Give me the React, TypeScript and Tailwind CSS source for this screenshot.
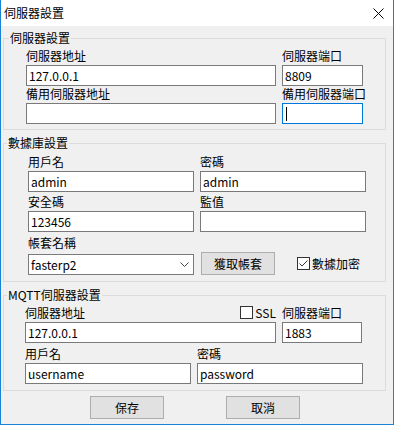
import React from "react";

const Label = ({ children, className = "" }: { children: React.ReactNode; className?: string }) => (
  <div className={`h-[15px] leading-[15px] text-[12px] text-black whitespace-nowrap ${className}`}>{children}</div>
);

const Field = ({ value = "", className = "", focused = false }: { value?: string; className?: string; focused?: boolean }) => (
  <div
    className={`h-[21px] bg-white border ${focused ? "border-[#0078d7]" : "border-[#7a7a7a]"} flex items-center pl-[2px] text-[12px] text-black whitespace-nowrap ${className}`}
  >
    {value}
    {focused && <span className="ml-[1px] w-px h-[14px] bg-black" />}
  </div>
);

const Check = ({ checked = false }: { checked?: boolean }) => (
  <span className="w-[13px] h-[13px] border border-[#333333] bg-white flex items-center justify-center shrink-0">
    {checked && (
      <svg width="11" height="11" viewBox="0 0 11 11">
        <path d="M1.5 5.5 L4 8 L9.5 2.5" fill="none" stroke="#333333" strokeWidth="1" />
      </svg>
    )}
  </span>
);

const Button = ({ children, className = "" }: { children: React.ReactNode; className?: string }) => (
  <div
    className={`w-[74px] h-[23px] bg-[#e1e1e1] border border-[#adadad] flex items-center justify-center text-[12px] text-black ${className}`}
  >
    {children}
  </div>
);

const Legend = ({ children, className = "" }: { children: React.ReactNode; className?: string }) => (
  <span className={`absolute top-[-8px] bg-[#f0f0f0] px-px leading-[14px] text-[12px] text-black whitespace-nowrap ${className}`}>
    {children}
  </span>
);

export default function App() {
  return (
    <div className="w-[394px] h-[425px] flex flex-col bg-[#f0f0f0] border-x border-b border-[#1883d7] font-['Noto_Sans_CJK_TC',sans-serif] overflow-hidden">
      {/* Title bar */}
      <div className="h-[26px] bg-white flex items-center justify-between pl-[3px] shrink-0">
        <span className="text-[12px] text-black leading-[14px]">伺服器設置</span>
        <svg width="11" height="11" viewBox="0 0 11 11" className="mr-[9px]">
          <path d="M0.5 0.5 L10.5 10.5 M10.5 0.5 L0.5 10.5" stroke="#000" strokeWidth="1" />
        </svg>
      </div>

      {/* Group 1 */}
      <div className="relative mt-[12px] ml-[2px] w-[383px] h-[92px] border border-[#dcdcdc] pt-[9px] pl-[22px] shrink-0">
        <Legend className="left-[5px]">伺服器設置</Legend>
        <div className="flex gap-x-[6px]">
          <div className="w-[250px] flex flex-col">
            <Label className="mb-[2px]">伺服器地址</Label>
            <Field value="127.0.0.1" />
            <Label className="mb-[2px]">備用伺服器地址</Label>
            <Field />
          </div>
          <div className="w-[81px] flex flex-col">
            <Label className="mb-[2px]">伺服器端口</Label>
            <Field value="8809" />
            <Label className="mb-[2px]">備用伺服器端口</Label>
            <Field focused />
          </div>
        </div>
      </div>

      {/* Group 2 */}
      <div className="relative mt-[13px] ml-[2px] w-[383px] h-[139px] border border-[#dcdcdc] pt-[10px] pl-[24px] shrink-0">
        <Legend className="left-[3px]">數據庫設置</Legend>
        <div className="flex gap-x-[6px]">
          <div className="w-[166px] flex flex-col">
            <Label className="mb-[2px]">用戶名</Label>
            <Field value="admin" />
            <Label className="mt-[2px] mb-[2px]">安全碼</Label>
            <Field value="123456" />
            <Label className="mt-[3px] mb-[2px]">帳套名稱</Label>
          </div>
          <div className="w-[166px] flex flex-col">
            <Label className="mb-[2px]">密碼</Label>
            <Field value="admin" />
            <Label className="mt-[2px] mb-[2px]">監值</Label>
            <Field />
          </div>
        </div>
        <div className="flex h-[23px] items-end">
          <div className="w-[166px] h-[21px] bg-white border border-[#7a7a7a] flex items-center justify-between pl-[2px] pr-[4px] text-[12px] text-black">
            <span>fasterp2</span>
            <svg width="9" height="5" viewBox="0 0 9 5">
              <path d="M0.5 0.5 L4.5 4.5 L8.5 0.5" fill="none" stroke="#444" strokeWidth="1" />
            </svg>
          </div>
          <Button className="ml-[7px]">獲取帳套</Button>
          <div className="self-center flex items-center ml-[22px] gap-x-[2px]">
            <Check checked />
            <span className="text-[12px] leading-[15px] text-black">數據加密</span>
          </div>
        </div>
      </div>

      {/* Group 3 */}
      <div className="relative mt-[13px] ml-[2px] w-[383px] h-[96px] border border-[#dcdcdc] pt-[9px] pl-[21px] shrink-0">
        <Legend className="left-[3px]">MQTT伺服器設置</Legend>
        <div className="flex gap-x-[6px]">
          <div className="w-[251px] flex flex-col">
            <div className="flex items-center justify-between mb-[2px]">
              <Label>伺服器地址</Label>
              <div className="flex items-center gap-x-[2px]">
                <Check />
                <span className="text-[12px] leading-[15px] text-black">SSL</span>
              </div>
            </div>
            <Field value="127.0.0.1" />
          </div>
          <div className="w-[80px] flex flex-col">
            <Label className="mb-[2px]">伺服器端口</Label>
            <Field value="1883" />
          </div>
        </div>
        <div className="flex gap-x-[6px] mt-[3px]">
          <div className="w-[166px] flex flex-col">
            <Label className="mb-[2px]">用戶名</Label>
            <Field value="username" />
          </div>
          <div className="w-[166px] flex flex-col">
            <Label className="mb-[2px]">密碼</Label>
            <Field value="password" />
          </div>
        </div>
      </div>

      {/* Buttons */}
      <div className="flex mt-[5px] ml-[89px] gap-x-[62px] shrink-0">
        <Button>保存</Button>
        <Button>取消</Button>
      </div>
    </div>
  );
}
